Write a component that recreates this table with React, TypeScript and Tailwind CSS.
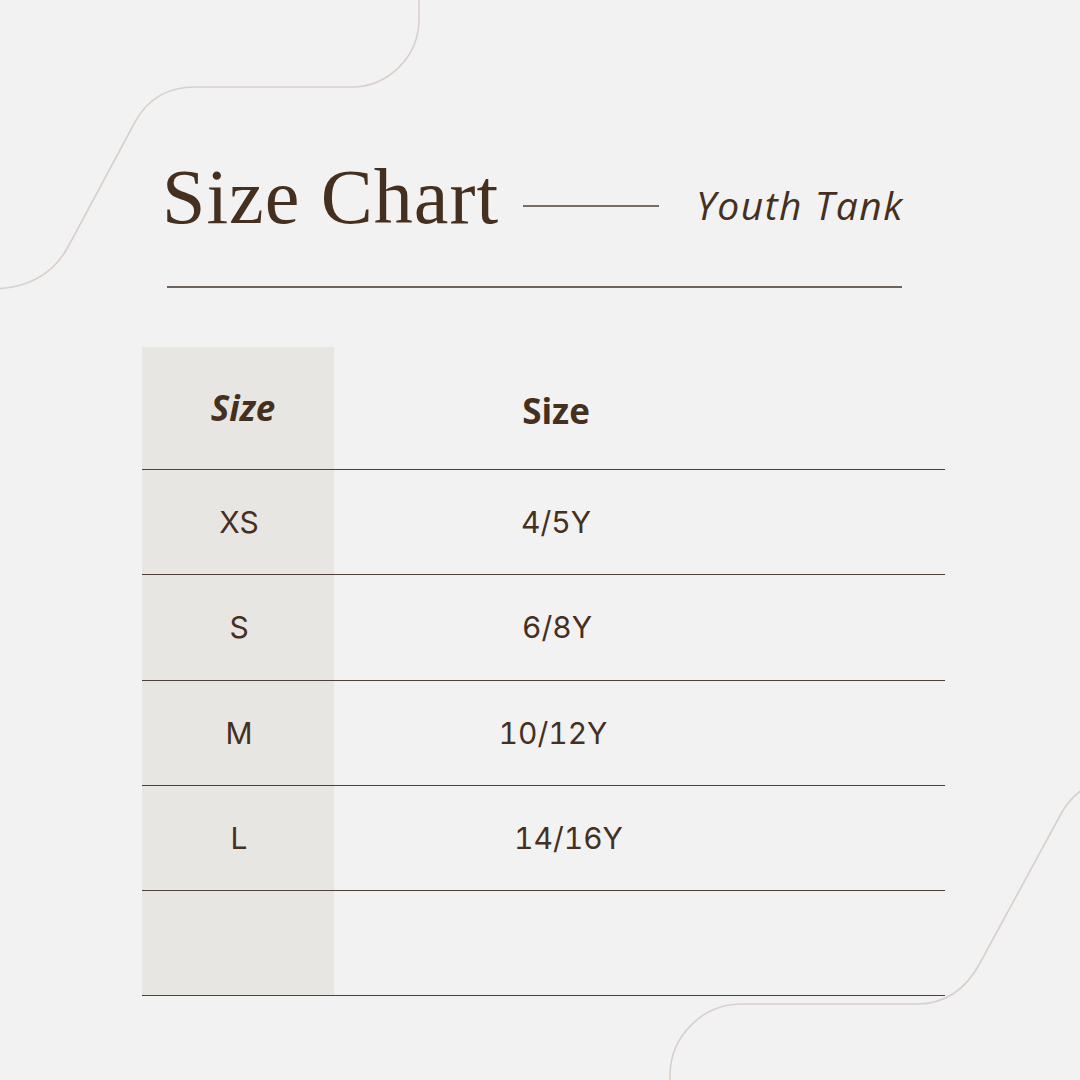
import React from "react";

const rows = [
  { size: "XS", age: "4/5Y", off: "ml-0", h: "h-[105px]" },
  { size: "S", age: "6/8Y", off: "ml-[2px]", h: "h-[106px]" },
  { size: "M", age: "10/12Y", off: "ml-[-6px]", h: "h-[105px]" },
  { size: "L", age: "14/16Y", off: "ml-[25px]", h: "h-[105px]" },
  { size: "", age: "", off: "ml-0", h: "h-[105px]" },
];

export default function App() {
  return (
    <div className="relative w-[1080px] h-[1080px] overflow-hidden bg-[#f2f2f2] text-[#45301f]">
      <svg
        className="absolute inset-0 pointer-events-none"
        width="1080"
        height="1080"
        viewBox="0 0 1080 1080"
        fill="none"
      >
        <path
          d="M -10 289 Q 45 289 68 247 L 135 122 Q 154 87 195 87 L 351 87 A 68 68 0 0 0 419 19 L 419 -5"
          stroke="#d9d0cb"
          strokeWidth="1.6"
        />
        <path
          d="M 670 1090 L 670 1076 A 72 72 0 0 1 742 1004 L 917 1004 Q 958 1004 980 963 L 1062 812 Q 1075 790 1100 780"
          stroke="#d9d0cb"
          strokeWidth="1.6"
        />
      </svg>

      <div className="relative flex flex-col pt-[158px]">
        <div className="flex items-center h-[78px] pl-[162px]">
          <h1 className="font-['Liberation_Serif',serif] text-[78px] leading-none font-normal tracking-[1px]">
            Size Chart
          </h1>
          <div className="ml-[24px] w-[136px] h-[1.5px] bg-[#7a6d66] mt-[18px]" />
          <div className="ml-[37px] font-['Open_Sans',sans-serif] italic text-[39px] leading-none tracking-[1.5px] mt-[14px]">
            Youth Tank
          </div>
        </div>

        <div className="ml-[167px] mt-[50px] w-[735px] h-[1.5px] bg-[#6e625b]" />

        <div className="ml-[142px] mt-[59px] w-[803px] flex flex-col">
          <div className="flex h-[123px] border-b-[1.5px] border-[#4e4038]">
            <div className="w-[192px] bg-[#e8e6e2] flex items-center justify-center pl-[10px]">
              <span className="font-['Open_Sans',sans-serif] italic font-bold text-[35px] leading-none">
                Size
              </span>
            </div>
            <div className="w-[444px] flex items-center justify-center pt-[6px]">
              <span className="font-['Open_Sans',sans-serif] font-bold text-[35px] leading-none">
                Size
              </span>
            </div>
          </div>
          {rows.map((r, i) => (
            <div
              key={i}
              className={`flex ${r.h} border-b-[1.5px] border-[#4e4038]`}
            >
              <div className="w-[192px] bg-[#e8e6e2] flex items-center justify-center pl-[2px]">
                <span className="font-['Inter',sans-serif] text-[30px] leading-none">
                  {r.size}
                </span>
              </div>
              <div className="w-[444px] flex items-center justify-center">
                <span
                  className={`${r.off} font-['Inter',sans-serif] text-[30px] leading-none tabular-nums`}
                >
                  {r.age}
                </span>
              </div>
            </div>
          ))}
        </div>
      </div>
    </div>
  );
}
